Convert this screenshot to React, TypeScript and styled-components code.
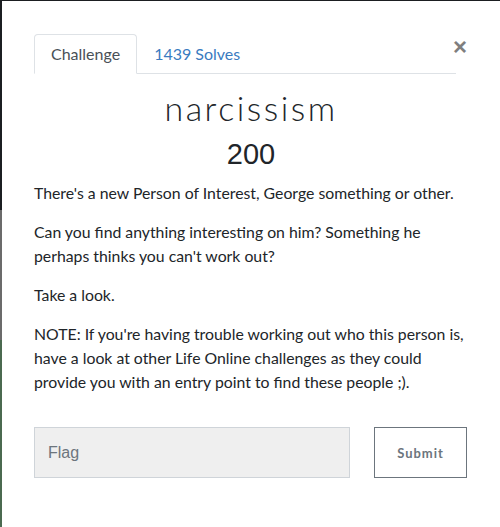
import React, { useState } from 'react';
import styled, { createGlobalStyle } from 'styled-components';

const GlobalStyle = createGlobalStyle`
    html, body {
        margin: 0;
        padding: 0;
        height: 100%;
    }
    body {
        background: linear-gradient(
            to bottom,
            #1b1e21 0px,
            #1b1e21 210px,
            #6b6b6b 210px,
            #6b6b6b 340px,
            #4b6a50 340px,
            #4b6a50 100%
        );
        font-family: Lato, "Noto Sans", sans-serif;
    }
`;

const Backdrop = styled.div`
    display: flex;
    min-height: 527px;
    padding: 1px 0 0 2px;
    box-sizing: border-box;
`;

const Modal = styled.div`
    flex: 1;
    background: #fff;
    padding: 33px 32px 40px 32px;
    position: relative;
`;

const CloseButton = styled.button`
    position: absolute;
    top: 34px;
    right: 33px;
    border: none;
    background: none;
    font-family: "Liberation Sans", Arial, sans-serif;
    font-size: 24px;
    font-weight: bold;
    line-height: 1;
    color: #7f7f7f;
    cursor: pointer;
    padding: 0;
`;

const Tabs = styled.ul`
    display: flex;
    list-style: none;
    margin: 0 12px 0 0;
    padding: 0;
    border-bottom: 1px solid #dee2e6;
`;

const Tab = styled.li<{ active?: boolean }>`
    margin-bottom: -1px;
    padding: 9px 16px 9px;
    font-size: 16px;
    line-height: 20px;
    border: 1px solid ${({ active }) => (active ? '#dee2e6' : 'transparent')};
    border-bottom-color: ${({ active }) => (active ? '#fff' : 'transparent')};
    border-radius: 4px 4px 0 0;
    background: ${({ active }) => (active ? '#fff' : 'transparent')};
    color: ${({ active }) => (active ? '#495057' : '#3a7bbf')};
    cursor: pointer;
`;

const Title = styled.h3`
    margin: 14px 0 0;
    text-align: center;
    font-family: Lato, sans-serif;
    font-weight: 300;
    font-size: 34px;
    letter-spacing: 2.5px;
    line-height: 40px;
    color: #212529;
`;

const Points = styled.h4`
    margin: 8px 0 9px;
    text-align: center;
    font-family: "Liberation Sans", Arial, sans-serif;
    font-weight: 400;
    font-size: 29px;
    line-height: 36px;
    color: #212529;
`;

const Description = styled.div`
    font-size: 15.8px;
    line-height: 24px;
    color: #212529;

    p {
        margin: 0 0 15px;
    }
`;

const FlagRow = styled.form`
    display: flex;
    gap: 24px;
    margin-top: 33px;
    padding-right: 1px;
`;

const FlagInput = styled.input`
    flex: 1;
    height: 51px;
    box-sizing: border-box;
    background: #efefef;
    border: 1px solid #cfd4d9;
    padding: 0 13px;
    font-family: "Liberation Sans", Arial, sans-serif;
    font-size: 16px;
    color: #495057;
    outline: none;

    &::placeholder {
        color: #6c757d;
    }
`;

const SubmitButton = styled.button`
    width: 93px;
    height: 51px;
    box-sizing: border-box;
    background: #fff;
    border: 1px solid #6c757d;
    color: #6c757d;
    font-family: Lato, sans-serif;
    font-weight: bold;
    font-size: 13px;
    letter-spacing: 1px;
    cursor: pointer;
`;

const App: React.FC = () => {
    const [aba, setAba] = useState(0);
    const [flag, setFlag] = useState('');

    return (
        <>
            <GlobalStyle />
            <Backdrop>
                <Modal>
                    <CloseButton>×</CloseButton>
                    <Tabs>
                        <Tab active={aba === 0} onClick={() => setAba(0)}>Challenge</Tab>
                        <Tab active={aba === 1} onClick={() => setAba(1)}>1439 Solves</Tab>
                    </Tabs>
                    <Title>narcissism</Title>
                    <Points>200</Points>
                    <Description>
                        <p>There's a new Person of Interest, George something or other.</p>
                        <p>Can you find anything interesting on him? Something he perhaps thinks you can't work out?</p>
                        <p>Take a look.</p>
                        <p>NOTE: If you're having trouble working out who this person is, have a look at other Life Online challenges as they could provide you with an entry point to find these people ;).</p>
                    </Description>
                    <FlagRow onSubmit={(e) => e.preventDefault()}>
                        <FlagInput placeholder="Flag" value={flag} onChange={(e) => setFlag(e.target.value)} />
                        <SubmitButton type="submit">Submit</SubmitButton>
                    </FlagRow>
                </Modal>
            </Backdrop>
        </>
    );
};

export default App;
